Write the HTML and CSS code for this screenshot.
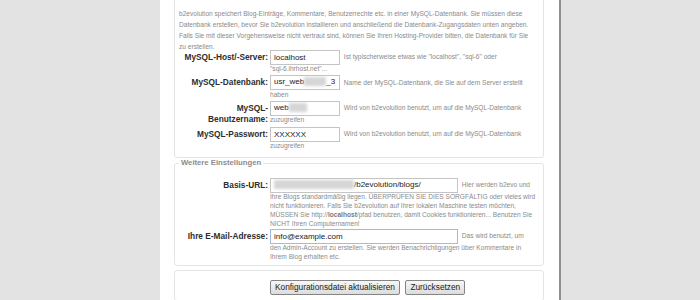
FILE: index.html
```html
<!DOCTYPE html>
<html lang="de">
<head>
    <meta charset="UTF-8">
    <meta name="viewport" content="width=device-width, initial-scale=1.0">
    <title>b2evolution Installation</title>
    <link rel="stylesheet" href="styles.css">
</head>
<body>
    <div class="install-page">
        <fieldset class="settings-box db-settings">
            <p class="intro">b2evolution speichert Blog-Einträge, Kommentare, Benutzerrechte etc. in einer MySQL-Datenbank. Sie müssen diese Datenbank erstellen, bevor Sie b2evolution installieren und anschließend die Datenbank-Zugangsdaten unten angeben. Falls Sie mit dieser Vorgehensweise nicht vertraut sind, können Sie Ihren Hosting-Provider bitten, die Datenbank für Sie zu erstellen.</p>

            <div class="form-row">
                <label class="form-label" for="db_host">MySQL-Host/-Server:</label>
                <div class="form-field">
                    <input type="text" class="text-input short" id="db_host" value="localhost">
                    <span class="hint">Ist typischerweise etwas wie "localhost", "sql-6" oder <span class="nowrap">"sql-6.ihrhost.net"...</span></span>
                </div>
            </div>

            <div class="form-row">
                <label class="form-label">MySQL-Datenbank:</label>
                <div class="form-field">
                    <span class="text-input short">usr_web<span class="blurred w-db"></span>_3</span>
                    <span class="hint">Name der MySQL-Datenbank, die Sie auf dem Server erstellt haben</span>
                </div>
            </div>

            <div class="form-row">
                <label class="form-label">MySQL-Benutzername:</label>
                <div class="form-field">
                    <span class="text-input short">web<span class="blurred w-user"></span></span>
                    <span class="hint">Wird von b2evolution benutzt, um auf die MySQL-Datenbank zuzugreifen</span>
                </div>
            </div>

            <div class="form-row">
                <label class="form-label" for="db_pass">MySQL-Passwort:</label>
                <div class="form-field">
                    <input type="text" class="text-input short" id="db_pass" value="XXXXXX">
                    <span class="hint">Wird von b2evolution benutzt, um auf die MySQL-Datenbank zuzugreifen</span>
                </div>
            </div>
        </fieldset>

        <fieldset class="settings-box extra-settings">
            <legend>Weitere Einstellungen</legend>

            <div class="form-row">
                <label class="form-label">Basis-URL:</label>
                <div class="form-field">
                    <span class="text-input long"><span class="blurred w-url"></span>/b2evolution/blogs/</span>
                    <span class="hint">Hier werden b2evo und Ihre Blogs standardmäßig liegen. ÜBERPRÜFEN SIE DIES SORGFÄLTIG oder vieles wird nicht funktionieren. Falls Sie b2evolution auf Ihrer lokalen Maschine testen möchten, MÜSSEN Sie http://<strong>localhost</strong>/pfad benutzen, damit Cookies funktionieren... Benutzen Sie NICHT Ihren Computernamen!</span>
                </div>
            </div>

            <div class="form-row">
                <label class="form-label" for="admin_email">Ihre E-Mail-Adresse:</label>
                <div class="form-field">
                    <input type="text" class="text-input long focused" id="admin_email" value="info@example.com">
                    <span class="hint">Das wird benutzt, um den Admin-Account zu erstellen. Sie werden Benachrichtigungen über Kommentare in Ihrem Blog erhalten etc.</span>
                </div>
            </div>
        </fieldset>

        <div class="settings-box button-box">
            <button type="submit" class="form-btn">Konfigurationsdatei aktualisieren</button>
            <button type="reset" class="form-btn">Zurücksetzen</button>
        </div>
    </div>
</body>
</html>
```

FILE: styles.css
```css
* {
    box-sizing: border-box;
}

body {
    margin: 0;
    background: #e3e3e3;
    font-family: "Liberation Sans", Arial, sans-serif;
    color: #333;
    overflow: hidden;
}

.install-page {
    width: 401px;
    min-height: 300px;
    margin-left: 160px;
    padding: 0 15px 0 14px;
    background: #fff;
    border-right: 2px solid #8f8f8f;
}

.settings-box {
    margin: 0 0 4px;
    padding: 0 7px 4px 4px;
    border: 1px solid #e4e4e4;
    border-radius: 3px;
    min-width: 0;
}

.db-settings {
    margin-top: -10px;
    margin-bottom: 0;
    padding-top: 17px;
    padding-bottom: 7px;
}

.extra-settings {
    padding-top: 10px;
    padding-bottom: 4px;
}

.extra-settings legend {
    padding: 0 2px;
    font-size: 7.7px;
    line-height: 10px;
    font-weight: bold;
    color: #8c8c8c;
}

.intro {
    margin: 0 0 -2px;
    font-size: 6.6px;
    line-height: 11px;
    color: #8a8a8a;
}

.form-row {
    display: flex;
    gap: 2px;
    margin-bottom: 2.5px;
}

.extra-settings .form-row {
    margin-bottom: 1px;
}

.form-row:last-child {
    margin-bottom: 0;
}

.form-label {
    flex: 0 0 89px;
    margin-top: 1.5px;
    text-align: right;
    font-size: 8.3px;
    line-height: 11px;
    font-weight: bold;
    color: #2e2e2e;
}

.form-field {
    flex: 1;
    font-size: 6.6px;
    line-height: 9px;
}

.text-input {
    display: inline-block;
    height: 15px;
    margin: -0.5px 2px -0.5px 0;
    padding: 0 3px;
    border: 1px solid #c4c4c4;
    background: #fff;
    font-family: "Liberation Sans", Arial, sans-serif;
    font-size: 8px;
    line-height: 12px;
    color: #222;
    vertical-align: middle;
    white-space: nowrap;
    overflow: hidden;
}

.text-input.short {
    width: 70px;
}

.text-input.long {
    width: 188px;
}

.text-input.focused {
    border-color: #9fbbe0;
}

.blurred {
    display: inline-block;
    height: 9px;
    background: #d6d6d6;
    filter: blur(1.5px);
    vertical-align: middle;
}

.w-db {
    width: 22px;
}

.w-user {
    width: 18px;
}

.w-url {
    width: 80px;
}

.hint {
    color: #8a8a8a;
}

.hint strong {
    color: #7a7a7a;
}

.nowrap {
    white-space: nowrap;
}

.button-box {
    margin: 0;
    padding: 5px 7px 5px 95px;
}

.form-btn {
    height: 15px;
    margin-right: 1px;
    padding: 0 4px;
    border: 1px solid #858585;
    border-radius: 2px;
    background: linear-gradient(#f7f7f7, #dcdcdc);
    font-family: "Liberation Sans", Arial, sans-serif;
    font-size: 8.3px;
    line-height: 13px;
    color: #222;
}
```
